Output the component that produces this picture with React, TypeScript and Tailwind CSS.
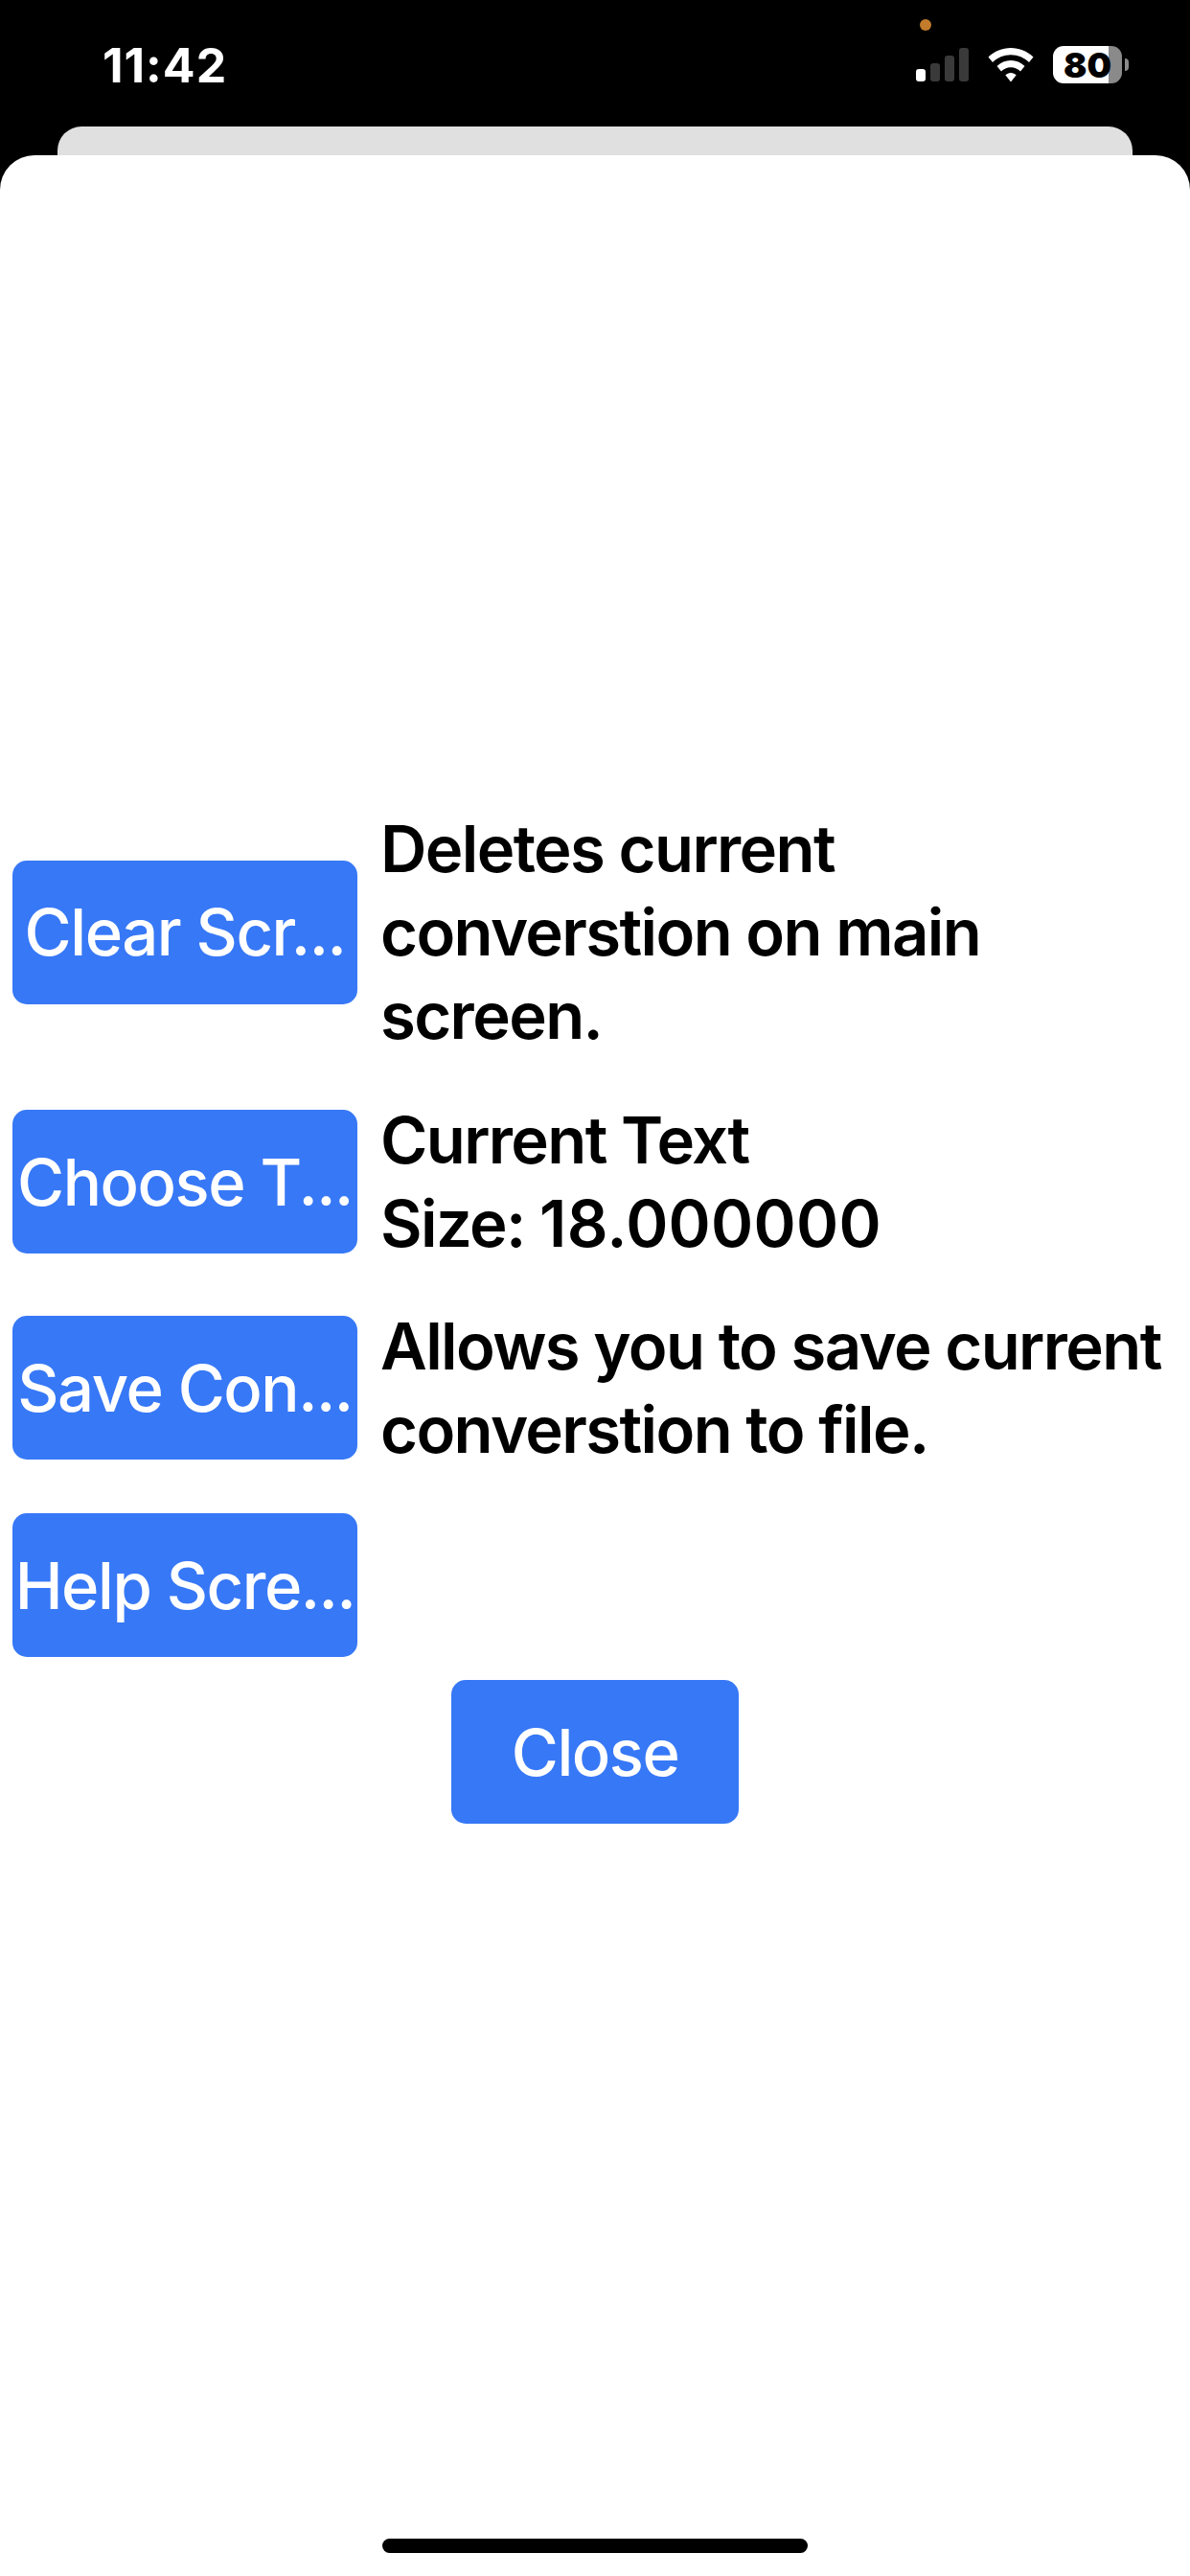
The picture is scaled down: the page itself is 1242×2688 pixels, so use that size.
import type { ReactNode } from "react";

const BLUE = "bg-[#3778f6]";

const SignalIcon = () => (
  <svg width="55" height="36" viewBox="0 0 55 36">
    <rect x="0" y="22" width="10" height="13" rx="3" fill="#fff" />
    <rect x="15" y="16" width="10" height="19" rx="3" fill="#3a3a3a" />
    <rect x="30" y="8" width="10" height="27" rx="3" fill="#3a3a3a" />
    <rect x="45" y="0" width="10" height="35" rx="3" fill="#3a3a3a" />
  </svg>
);

const WifiIcon = () => (
  <svg width="48" height="36" viewBox="0 0 48 36">
    <path d="M24 0C15 0 7 3.500 0.500 9.500L5 15C10 10 16.500 7.200 24 7.200C31.500 7.200 38 10 43 15L47.500 9.500C41 3.500 33 0 24 0Z" fill="#fff" />
    <path d="M24 13C18.500 13 13.500 15.200 9.500 19L14 24.500C16.500 22 20 20.300 24 20.300C28 20.300 31.500 22 34 24.500L38.500 19C34.500 15.200 29.500 13 24 13Z" fill="#fff" />
    <path d="M24 26C21.700 26 19.800 27 18.300 28.300L24 35.500L29.700 28.300C28.200 27 26.300 26 24 26Z" fill="#fff" />
  </svg>
);

const Battery = () => (
  <div className="flex items-center">
    <div className="flex h-[39px] w-[72px] items-center justify-center rounded-[11px] bg-[linear-gradient(90deg,#ffffff_81%,#8a8a8a_81%)] text-[36px] font-black leading-none text-black">
      80
    </div>
    <div className="ml-[3px] h-[13px] w-[4px] rounded-r-full bg-[#8a8a8a]" />
  </div>
);

const StatusBar = () => (
  <div className="relative flex h-[132px] shrink-0 items-start justify-between pl-[107px] pr-[64px] pt-[39px] text-white">
    <span className="text-[50px] font-bold leading-[58px] tracking-[0.02em]">11:42</span>
    <div className="absolute left-[960px] top-[20px] h-3 w-3 rounded-full bg-[#c27c2c]" />
    <div className="flex items-center gap-[20px] pt-[9px]">
      <SignalIcon />
      <WifiIcon />
      <Battery />
    </div>
  </div>
);

const ActionButton = ({ label, className }: { label: string; className: string }) => (
  <button
    className={`flex h-[150px] shrink-0 items-center justify-center overflow-hidden rounded-[15px] ${BLUE} whitespace-nowrap pt-[2px] text-[67px] font-medium tracking-[-0.022em] text-white ${className}`}
  >
    {label}
  </button>
);

const ROWS: { label: string; text: ReactNode; gap: string }[] = [
  { label: "Clear Scr...", text: "Deletes current converstion on main screen.", gap: "" },
  {
    label: "Choose T...",
    text: (
      <>
        <span className="block">Current Text</span>
        <span className="block">
          Size:{"\u00A0"}
          <span className="tracking-[0.004em]">18.000000</span>
        </span>
      </>
    ),
    gap: "mt-[43px]",
  },
  { label: "Save Con...", text: "Allows you to save current converstion to file.", gap: "mt-[41px]" },
  { label: "Help Scre...", text: null, gap: "mt-[44px]" },
];

export default function App() {
  return (
    <div className="flex h-[2688px] w-[1242px] flex-col bg-black font-['Inter',sans-serif]">
      <StatusBar />
      <div className="mx-[60px] h-[30px] shrink-0 rounded-t-[25px] bg-[#e0e0e0]" />
      <div className="flex flex-1 flex-col rounded-t-[36px] bg-white pt-[680px]">
        <div className="flex flex-col pl-[13px]">
          {ROWS.map((row) => (
            <div key={row.label} className={`flex items-center gap-[24px] ${row.gap}`}>
              <ActionButton label={row.label} className="w-[360px]" />
              {row.text && (
                <p className="w-[825px] text-[67px] font-semibold leading-[87px] tracking-[-0.024em] text-black">{row.text}</p>
              )}
            </div>
          ))}
        </div>
        <div className="mt-[24px] flex justify-center">
          <ActionButton label="Close" className="w-[300px]" />
        </div>
        <div className="mx-auto mb-[24px] mt-auto h-[15px] w-[444px] rounded-full bg-black" />
      </div>
    </div>
  );
}
